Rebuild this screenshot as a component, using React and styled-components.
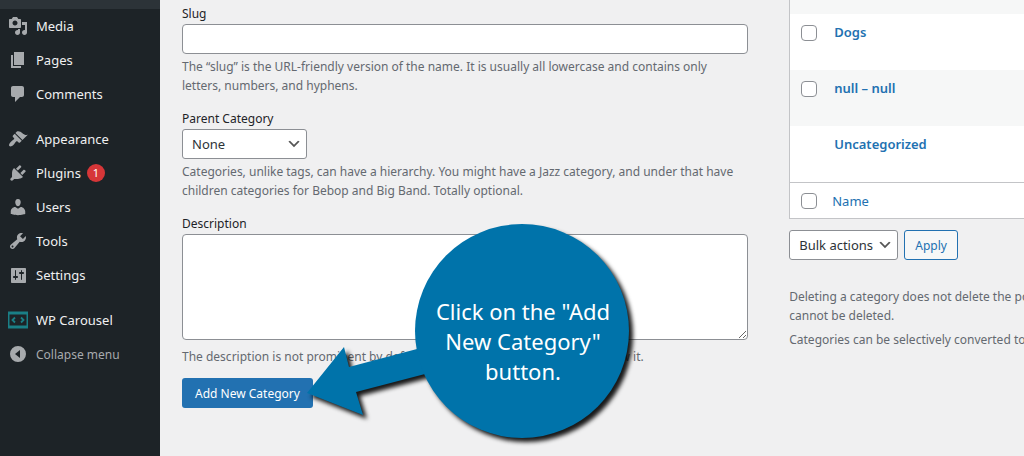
import React from "react";
import styled, { createGlobalStyle } from "styled-components";

const GlobalStyle = createGlobalStyle`
  * {
    box-sizing: border-box;
  }

  body {
    margin: 0;
    background: #f0f0f1;
    color: #1d2327;
    font-family: "Noto Sans", "Open Sans", sans-serif;
    font-size: 12px;
    line-height: 19px;
    overflow: hidden;
  }
`;

const Page = styled.div`
  position: relative;
  display: flex;
  min-height: 100vh;
`;

const Sidebar = styled.nav`
  flex: 0 0 160px;
  background: #1d2327;
`;

const SubmenuEnd = styled.div`
  height: 9px;
  background: #2c3338;
`;

const MenuGroup = styled.div`
  display: flex;
  flex-direction: column;
  margin-bottom: 11px;
`;

const MenuLink = styled.a`
  display: flex;
  align-items: center;
  gap: 8px;
  height: 34px;
  padding: 0 8px;
  color: #f0f0f1;
  font-size: 13px;
  text-decoration: none;
`;

const CollapseButton = styled.button`
  display: flex;
  align-items: center;
  gap: 8px;
  width: 100%;
  height: 34px;
  padding: 0 8px;
  border: none;
  background: none;
  color: #a7aaad;
  font: inherit;
  cursor: pointer;
`;

const MenuIcon = styled.svg`
  flex: 0 0 20px;
  width: 20px;
  height: 20px;
  fill: #a7aaad;
`;

const Badge = styled.span`
  width: 18px;
  height: 18px;
  margin-left: -2px;
  border-radius: 9px;
  background: #d63638;
  color: #fff;
  font-size: 11px;
  line-height: 18px;
  text-align: center;
`;

const Content = styled.main`
  flex: 1;
  min-width: 0;
  display: grid;
  grid-template-columns: minmax(0, 41fr) minmax(0, 17fr);
  column-gap: 41px;
  padding-left: 22px;
`;

const Form = styled.form`
  padding-top: 4px;
`;

const Field = styled.div`
  display: flex;
  flex-direction: column;
  align-items: flex-start;
  margin-bottom: 14px;

  &:last-of-type {
    margin-bottom: 12px;
  }
`;

const Label = styled.label`
  height: 20px;
`;

const Input = styled.input`
  width: 100%;
  height: 30px;
  padding: 0 8px;
  border: 1px solid #8c8f94;
  border-radius: 4px;
  background: #fff;
  font: inherit;
`;

const TextArea = styled.textarea`
  display: block;
  width: 100%;
  height: 106px;
  padding: 2px 6px;
  border: 1px solid #8c8f94;
  border-radius: 4px;
  background: #fff;
  font: inherit;
`;

const Help = styled.p`
  margin: ${(props) => props.$top || 3}px 0 0;
  color: #646970;
`;

const SelectBox = styled.div`
  position: relative;
  width: ${(props) => props.$width}px;
`;

const Select = styled.select`
  appearance: none;
  display: block;
  width: 100%;
  height: 30px;
  padding: 0 24px 0 9px;
  border: 1px solid #8c8f94;
  border-radius: 3px;
  background: #fff;
  color: #2c3338;
  font: inherit;
  font-size: 13px;
`;

const Chevron = styled.svg`
  position: absolute;
  top: 7px;
  right: 5px;
  width: 16px;
  height: 16px;
  pointer-events: none;
`;

const PrimaryButton = styled.button`
  display: block;
  height: 30px;
  padding: 0 13px;
  border: none;
  border-radius: 3px;
  background: #2271b1;
  color: #fff;
  font: inherit;
  cursor: pointer;
`;

const ApplyButton = styled.button`
  height: 30px;
  padding: 0 10px;
  border: 1px solid #2271b1;
  border-radius: 3px;
  background: #f6f7f7;
  color: #2271b1;
  font: inherit;
  cursor: pointer;
`;

const List = styled.section`
  overflow: hidden;
`;

const Table = styled.table`
  width: 100%;
  border-collapse: separate;
  border-spacing: 0;
  border: 1px solid #c3c4c7;
  border-width: 0 0 1px 1px;
  background: #fff;
`;

const Row = styled.tr`
  height: ${(props) => props.$height || 56}px;
  background: ${(props) => (props.$striped ? "#f6f7f7" : "#fff")};
`;

const CheckCell = styled.td`
  width: 36px;
  padding: 11px 0 0 11px;
  vertical-align: top;
`;

const NameCell = styled.td`
  padding: 9px 8px 0;
  vertical-align: top;
`;

const FootCheckCell = styled(CheckCell)`
  padding-top: 10px;
  border-top: 1px solid #c3c4c7;
`;

const FootCell = styled.th`
  padding: 9px 6px 0;
  border-top: 1px solid #c3c4c7;
  font-weight: 400;
  text-align: left;
  vertical-align: top;
`;

const Checkbox = styled.input`
  appearance: none;
  display: block;
  width: 16px;
  height: 16px;
  margin: 0;
  border: 1px solid #8c8f94;
  border-radius: 4px;
  background: #fff;
`;

const NameLink = styled.a`
  color: #2271b1;
  font-size: 13px;
  font-weight: ${(props) => (props.$strong ? 600 : 400)};
  text-decoration: none;
`;

const BulkActions = styled.div`
  display: flex;
  gap: 6px;
  margin: 11px 0 27px;
`;

const Note = styled.p`
  margin: 0 0 5px;
  color: #646970;
  white-space: nowrap;
`;

const Callout = styled.div`
  position: absolute;
  top: 216px;
  left: 300px;
  width: 350px;
  height: 240px;
  pointer-events: none;
`;

const CalloutShape = styled.svg`
  display: block;
  width: 350px;
  height: 240px;
  fill: #0073aa;
  filter: drop-shadow(4px 4px 2px rgba(0, 0, 0, 0.9));
`;

const CalloutText = styled.p`
  position: absolute;
  top: 80px;
  left: 115px;
  width: 216px;
  margin: 0;
  color: #fff;
  font-size: 22px;
  line-height: 30px;
  text-align: center;
`;

const icons = {
  media:
    "M13 11V4c0-.55-.45-1-1-1h-1.67L9 1H5L3.67 3H2c-.55 0-1 .45-1 1v7c0 .55.45 1 1 1h10c.55 0 1-.45 1-1zM7 4.5c1.38 0 2.5 1.12 2.5 2.5S8.38 9.5 7 9.5 4.5 8.38 4.5 7 5.62 4.5 7 4.5zM14 6h5v10.5c0 1.38-1.12 2.5-2.5 2.5S14 17.88 14 16.5s1.12-2.5 2.5-2.5c.17 0 .34.02.5.05V9h-3V6zm-4 8.05V13h2v3.5c0 1.38-1.12 2.5-2.5 2.5S7 17.88 7 16.5 8.12 14 9.5 14c.17 0 .34.02.5.05z",
  pages: "M6 15V2h10v13H6zm-1 1h8v2H3V5h2v11z",
  comments:
    "M5 2h9c1.1 0 2 .9 2 2v7c0 1.1-.9 2-2 2h-2l-5 5v-5H5c-1.1 0-2-.9-2-2V4c0-1.1.9-2 2-2z",
  appearance:
    "M14.48 11.06L7.41 3.99l1.5-1.5c.5-.56 2.3-.47 3.51.32 1.21.8 1.43 1.28 2.91 2.1 1.18.64 2.45 1.26 4.45.85zm-.71.71L6.7 4.7 4.93 6.47c-.39.39-.39 1.02 0 1.41l1.06 1.06c.39.39.39 1.03 0 1.42-.6.6-1.43 1.11-2.21 1.69-.35.26-.7.53-1.01.84C1.43 14.23.4 16.08 1.4 17.07c.99 1 2.84-.03 4.18-1.36.31-.31.58-.66.85-1.02.57-.78 1.08-1.61 1.69-2.21.39-.39 1.02-.39 1.41 0l1.06 1.06c.39.39 1.02.39 1.41 0z",
  plugins:
    "M13.11 4.36L9.87 7.6 8 5.73l3.24-3.24c.35-.34 1.05-.2 1.56.32.52.51.66 1.21.31 1.55zm-8 1.77l.91-1.12 9.01 9.01-1.19.84c-.71.71-2.63 1.16-3.82 1.16H6.14L4.9 17.26c-.59.59-1.54.59-2.12 0-.59-.58-.59-1.53 0-2.12l1.24-1.24v-3.88c0-1.13.4-3.19 1.09-3.89zm7.26 3.97l3.24-3.24c.34-.35 1.04-.21 1.55.31.52.51.66 1.21.31 1.55l-3.24 3.25z",
  users:
    "M10 9.25c-2.27 0-2.73-3.44-2.73-3.44C7 4.02 7.82 2 9.97 2c2.16 0 2.98 2.02 2.71 3.81 0 0-.41 3.44-2.68 3.44zm0 2.57L12.72 10c2.39 0 4.52 2.33 4.52 4.53v2.49s-3.65 1.13-7.24 1.13c-3.65 0-7.24-1.13-7.24-1.13v-2.49c0-2.25 1.94-4.48 4.47-4.48z",
  tools:
    "M16.68 9.77c-1.34 1.34-3.3 1.67-4.95.99l-5.41 6.52c-.99.99-2.59.99-3.58 0s-.99-2.59 0-3.57l6.52-5.42c-.68-1.65-.35-3.61.99-4.95 1.28-1.28 3.12-1.62 4.72-1.06l-2.89 2.89 2.82 2.82 2.86-2.87c.53 1.58.18 3.39-1.08 4.65zM3.81 16.21c.4.39 1.04.39 1.43 0 .4-.4.4-1.04 0-1.43-.39-.4-1.03-.4-1.43 0-.39.39-.39 1.03 0 1.43z",
  settings:
    "M18 16V4c0-.55-.45-1-1-1H4c-.55 0-1 .45-1 1v13c0 .55.45 1 1 1h13c.55 0 1-.45 1-1zM8 11h1c.55 0 1 .45 1 1s-.45 1-1 1H8v1.5c0 .28-.22.5-.5.5s-.5-.22-.5-.5V13H6c-.55 0-1-.45-1-1s.45-1 1-1h1V5.5c0-.28.22-.5.5-.5s.5.22.5.5V11zm5-2h-1c-.55 0-1-.45-1-1s.45-1 1-1h1V5.5c0-.28.22-.5.5-.5s.5.22.5.5V7h1c.55 0 1 .45 1 1s-.45 1-1 1h-1v5.5c0 .28-.22.5-.5.5s-.5-.22-.5-.5V9z",
};

const contentMenu = [
  { title: "Media", icon: "media" },
  { title: "Pages", icon: "pages" },
  { title: "Comments", icon: "comments" },
];

const adminMenu = [
  { title: "Appearance", icon: "appearance" },
  { title: "Plugins", icon: "plugins", count: 1 },
  { title: "Users", icon: "users" },
  { title: "Tools", icon: "tools" },
  { title: "Settings", icon: "settings" },
];

const categories = [
  { name: "Dogs", removable: true },
  { name: "null – null", removable: true, striped: true },
  { name: "Uncategorized" },
];

const MenuItem = ({ item }) => {
  return (
    <MenuLink href="#">
      <MenuIcon viewBox="0 0 20 20">
        <path fillRule="evenodd" d={icons[item.icon]} />
      </MenuIcon>
      <span>{item.title}</span>
      {item.count && <Badge>{item.count}</Badge>}
    </MenuLink>
  );
};

const Dropdown = ({ id, label, width, option }) => {
  return (
    <SelectBox $width={width}>
      <Select id={id} aria-label={label}>
        <option>{option}</option>
      </Select>
      <Chevron viewBox="0 0 20 20">
        <path d="M5 6l5 5 5-5 2 1-7 7-7-7 2-1z" fill="#555" />
      </Chevron>
    </SelectBox>
  );
};

const App = () => {
  return (
    <>
      <GlobalStyle />
      <Page>
        <Sidebar>
          <SubmenuEnd />
          <MenuGroup>
            {contentMenu.map((item) => (
              <MenuItem item={item} key={item.title} />
            ))}
          </MenuGroup>
          <MenuGroup>
            {adminMenu.map((item) => (
              <MenuItem item={item} key={item.title} />
            ))}
          </MenuGroup>
          <MenuGroup>
            <MenuLink href="#">
              <MenuIcon viewBox="0 0 20 20">
                <g fill="none" stroke="#1a7f86">
                  <path d="M0 3h20v14H0z" strokeWidth="3" />
                  <path d="M7 7.5L4.500 10 7 12.500M13 7.500L15.500 10 13 12.500" strokeWidth="1.800" />
                </g>
              </MenuIcon>
              <span>WP Carousel</span>
            </MenuLink>
            <CollapseButton type="button">
              <MenuIcon viewBox="0 0 20 20">
                <path
                  fillRule="evenodd"
                  d="M10 2a8 8 0 1 1 0 16 8 8 0 0 1 0-16zM12 6L7 10l5 4z"
                />
              </MenuIcon>
              <span>Collapse menu</span>
            </CollapseButton>
          </MenuGroup>
        </Sidebar>

        <Content>
          <Form onSubmit={(e) => e.preventDefault()}>
            <Field>
              <Label htmlFor="slug">Slug</Label>
              <Input id="slug" type="text" />
              <Help>
                The “slug” is the URL-friendly version of the name. It is
                usually all lowercase and contains only
                <br />
                letters, numbers, and hyphens.
              </Help>
            </Field>
            <Field>
              <Label htmlFor="parent">Parent Category</Label>
              <Dropdown id="parent" width={125} option="None" />
              <Help>
                Categories, unlike tags, can have a hierarchy. You might have a
                Jazz category, and under that have
                <br />
                children categories for Bebop and Big Band. Totally optional.
              </Help>
            </Field>
            <Field>
              <Label htmlFor="description">Description</Label>
              <TextArea id="description" />
              <Help $top={7}>
                The description is not prominent by default; however, some
                themes might show it.
              </Help>
            </Field>
            <PrimaryButton>Add New Category</PrimaryButton>
          </Form>

          <List>
            <Table>
              <tbody>
                <Row $striped $height={14}>
                  <td colSpan={2} />
                </Row>
                {categories.map((category) => (
                  <Row $striped={category.striped} key={category.name}>
                    <CheckCell>
                      {category.removable && (
                        <Checkbox
                          type="checkbox"
                          aria-label={`Select ${category.name}`}
                        />
                      )}
                    </CheckCell>
                    <NameCell>
                      <NameLink href="#" $strong>
                        {category.name}
                      </NameLink>
                    </NameCell>
                  </Row>
                ))}
              </tbody>
              <tfoot>
                <Row $height={36}>
                  <FootCheckCell>
                    <Checkbox type="checkbox" aria-label="Select All" />
                  </FootCheckCell>
                  <FootCell>
                    <NameLink href="#">Name</NameLink>
                  </FootCell>
                </Row>
              </tfoot>
            </Table>
            <BulkActions>
              <Dropdown
                id="bulk"
                label="Select bulk action"
                width={109}
                option="Bulk actions"
              />
              <ApplyButton type="button">Apply</ApplyButton>
            </BulkActions>
            <Note>
              Deleting a category does not delete the posts
              <br />
              cannot be deleted.
            </Note>
            <Note>Categories can be selectively converted to</Note>
          </List>
        </Content>

        <Callout>
          <CalloutShape viewBox="0 0 350 240">
            <path d="M7 177L44 131l5 20 68-18 8 25-69 18 7 23z" />
            <circle cx="222" cy="115" r="107" />
          </CalloutShape>
          <CalloutText>
            Click on the "Add
            <br />
            New Category"
            <br />
            button.
          </CalloutText>
        </Callout>
      </Page>
    </>
  );
};

export default App;
